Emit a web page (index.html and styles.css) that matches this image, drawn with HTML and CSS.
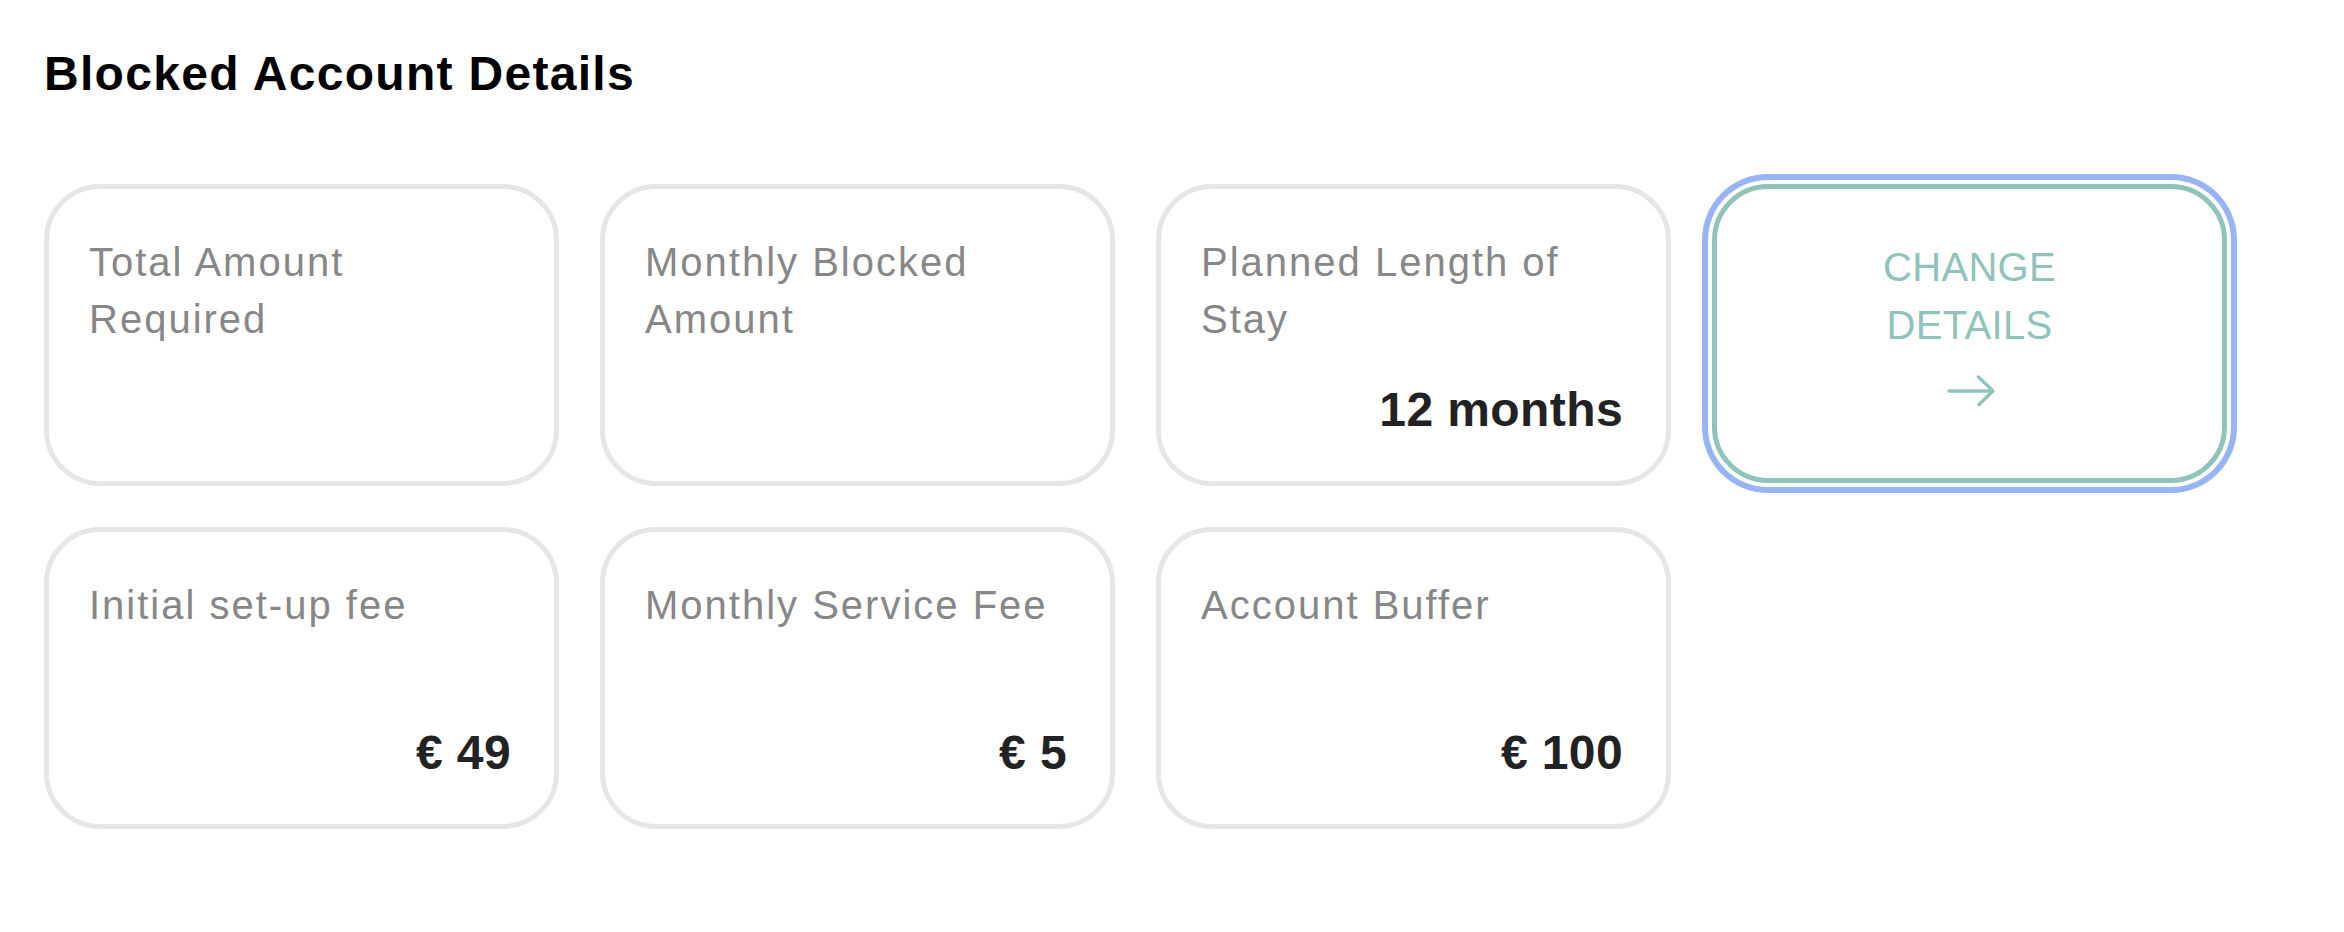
FILE: index.html
```html
<!DOCTYPE html>
<html lang="en">
<head>
<meta charset="utf-8">
<title>Blocked Account Details</title>
<link rel="stylesheet" href="styles.css">
</head>
<body>
<main class="page">
  <h1 class="title">Blocked Account Details</h1>
  <section class="grid">
    <div class="card">
      <div class="card-label">Total Amount Required</div>
      <div class="card-value"></div>
    </div>
    <div class="card">
      <div class="card-label">Monthly Blocked Amount</div>
      <div class="card-value"></div>
    </div>
    <div class="card">
      <div class="card-label">Planned Length of Stay</div>
      <div class="card-value">12 months</div>
    </div>
    <button class="change-btn" type="button">
      <span class="change-line">CHANGE</span>
      <span class="change-line">DETAILS</span>
      <svg class="change-arrow" width="48" height="32" viewBox="0 0 48 32" aria-hidden="true">
        <path d="M2 16 H46 M31.5 2 L46 16 L32 29.5" fill="none" stroke="currentColor" stroke-width="3.3" stroke-linecap="round" stroke-linejoin="round"/>
      </svg>
    </button>
    <div class="card">
      <div class="card-label">Initial set-up fee</div>
      <div class="card-value">€ 49</div>
    </div>
    <div class="card">
      <div class="card-label">Monthly Service Fee</div>
      <div class="card-value">€ 5</div>
    </div>
    <div class="card">
      <div class="card-label">Account Buffer</div>
      <div class="card-value">€ 100</div>
    </div>
  </section>
</main>
</body>
</html>
```

FILE: styles.css
```css
html, body {
  margin: 0;
  padding: 0;
  background: #ffffff;
}

body {
  font-family: "Liberation Sans", Arial, sans-serif;
  color: #222222;
}

.page {
  padding: 46px 0 0 44px;
}

.title {
  margin: 0;
  font-size: 48px;
  line-height: 55px;
  font-weight: 700;
  letter-spacing: 1.3px;
  color: #000000;
}

.grid {
  margin-top: 83px;
  display: grid;
  grid-template-columns: repeat(4, 515px);
  column-gap: 41px;
  row-gap: 41px;
  align-items: start;
}

.card {
  box-sizing: border-box;
  height: 302px;
  border: 5px solid #e6e6e6;
  border-radius: 56px;
  padding: 45px 43px 44px 40px;
  display: flex;
  flex-direction: column;
  justify-content: space-between;
  background: #ffffff;
}

.card-label {
  font-size: 40px;
  line-height: 57px;
  letter-spacing: 2px;
  color: #878787;
}

.card-value {
  font-size: 48px;
  line-height: 55px;
  min-height: 55px;
  font-weight: 700;
  letter-spacing: 0.4px;
  text-align: right;
  color: #222222;
}

.change-btn {
  box-sizing: border-box;
  width: 100%;
  height: 299px;
  margin: 0;
  padding: 50px 0 0 0;
  border: 5px solid #8fc4bb;
  border-radius: 56px;
  background: #ffffff;
  box-shadow: 0 0 0 4px #ffffff, 0 0 0 10px #97b5f4;
  display: flex;
  flex-direction: column;
  align-items: center;
  justify-content: flex-start;
  font-family: "Liberation Sans", Arial, sans-serif;
  color: #8fc4bb;
  cursor: pointer;
  outline: none;
}

.change-line {
  display: block;
  font-size: 40px;
  line-height: 57.5px;
  letter-spacing: 0.3px;
}

.change-arrow {
  display: block;
  margin-top: 21px;
  margin-left: 2px;
}
```
